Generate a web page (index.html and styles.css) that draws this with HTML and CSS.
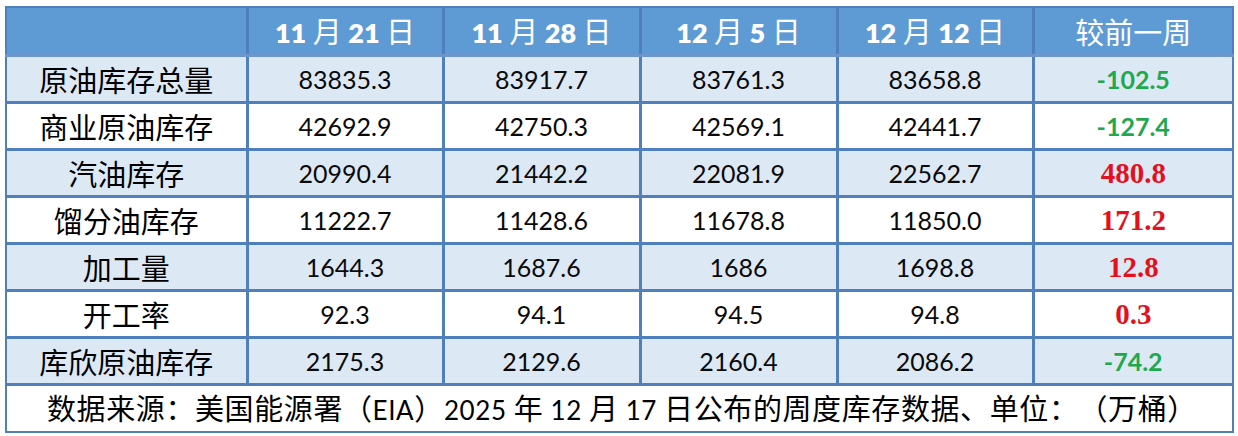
FILE: index.html
```html
<!DOCTYPE html>
<html lang="zh-CN">
<head>
<meta charset="utf-8">
<title>EIA 周度库存</title>
<link rel="stylesheet" href="styles.css">
</head>
<body>
<table class="tbl">
  <colgroup>
    <col class="c-label">
    <col class="c-a">
    <col class="c-b">
    <col class="c-c">
    <col class="c-d">
    <col class="c-e">
  </colgroup>
  <thead>
    <tr class="head">
      <th></th>
      <th><span class="hn">11</span> 月 <span class="hn">21</span> 日</th>
      <th><span class="hn">11</span> 月 <span class="hn">28</span> 日</th>
      <th><span class="hn">12</span> 月 <span class="hn">5</span> 日</th>
      <th><span class="hn">12</span> 月 <span class="hn">12</span> 日</th>
      <th>较前一周</th>
    </tr>
  </thead>
  <tbody>
    <tr class="alt">
      <td class="lbl">原油库存总量</td>
      <td class="n">83835.3</td><td class="n">83917.7</td><td class="n">83761.3</td><td class="n">83658.8</td>
      <td class="down">-102.5</td>
    </tr>
    <tr>
      <td class="lbl">商业原油库存</td>
      <td class="n">42692.9</td><td class="n">42750.3</td><td class="n">42569.1</td><td class="n">42441.7</td>
      <td class="down">-127.4</td>
    </tr>
    <tr class="alt">
      <td class="lbl">汽油库存</td>
      <td class="n">20990.4</td><td class="n">21442.2</td><td class="n">22081.9</td><td class="n">22562.7</td>
      <td class="up">480.8</td>
    </tr>
    <tr>
      <td class="lbl">馏分油库存</td>
      <td class="n">11222.7</td><td class="n">11428.6</td><td class="n">11678.8</td><td class="n">11850.0</td>
      <td class="up">171.2</td>
    </tr>
    <tr class="alt">
      <td class="lbl">加工量</td>
      <td class="n">1644.3</td><td class="n">1687.6</td><td class="n">1686</td><td class="n">1698.8</td>
      <td class="up">12.8</td>
    </tr>
    <tr>
      <td class="lbl">开工率</td>
      <td class="n">92.3</td><td class="n">94.1</td><td class="n">94.5</td><td class="n">94.8</td>
      <td class="up">0.3</td>
    </tr>
    <tr class="alt">
      <td class="lbl">库欣原油库存</td>
      <td class="n">2175.3</td><td class="n">2129.6</td><td class="n">2160.4</td><td class="n">2086.2</td>
      <td class="down">-74.2</td>
    </tr>
    <tr class="foot">
      <td colspan="6">数据来源：美国能源署（<span class="fn">EIA</span>）<span class="fn">2025</span> 年 <span class="fn">12</span> 月 <span class="fn">17</span> 日公布的周度库存数据、单位：（万桶）</td>
    </tr>
  </tbody>
</table>
</body>
</html>
```

FILE: styles.css
```css
html, body {
  margin: 0;
  padding: 0;
  background: #ffffff;
}

.tbl {
  border-collapse: collapse;
  table-layout: fixed;
  width: 1227px;
  margin: 6px 0 0 5px;
  font-family: "Noto Sans CJK SC", "Noto Sans", sans-serif;
  color: #000;
  text-spacing-trim: space-all;
}

.c-label { width: 241px; }
.c-a { width: 196px; }
.c-b { width: 197px; }
.c-c { width: 197px; }
.c-d { width: 196px; }
.c-e { width: 200px; }

.tbl th,
.tbl td {
  border: 3px solid #4f7fbd;
  padding: 0;
  text-align: center;
  vertical-align: middle;
  white-space: nowrap;
  line-height: 1;
}

.tbl tr > :first-child { border-left-width: 2px; }
.tbl tr > :last-child { border-right-width: 2px; }

.head th {
  height: 46px;
  background: #5e9bd4;
  color: #ffffff;
  font-weight: 400;
  font-size: 29px;
  border-top-width: 2px;
  border-bottom-color: #6d96cc;
}

.hn {
  font-family: "Lato", sans-serif;
  font-weight: 800;
  font-size: 27px;
}

tbody tr { height: 47px; }
tbody tr.alt { background: #dde8f5; }

.lbl {
  font-size: 29px;
}

.n {
  font-family: "Lato", sans-serif;
  font-size: 25px;
  color: #0a0a0a;
}

.down {
  font-family: "Lato", sans-serif;
  font-weight: 700;
  font-size: 25px;
  color: #1fa84c;
}

.up {
  font-family: "Liberation Serif", serif;
  font-weight: 700;
  font-size: 29px;
  color: #e5101c;
}

.foot td {
  background: #ffffff;
  text-align: left;
  padding-left: 40px;
  font-size: 29px;
  letter-spacing: 0.6px;
  border-bottom-width: 2px;
}

.fn {
  font-family: "Lato", sans-serif;
  font-size: 26px;
}
```
